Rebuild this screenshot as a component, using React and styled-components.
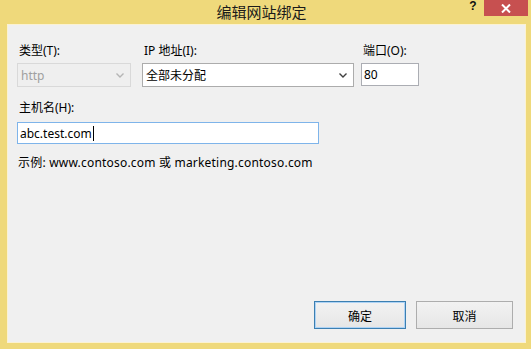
import styled, { createGlobalStyle } from 'styled-components';

const GlobalStyle = createGlobalStyle`
  html, body {
    margin: 0;
    padding: 0;
    background: #efd97b;
  }
  * {
    box-sizing: border-box;
  }
`;

const UI_FONT = `"Noto Sans", "Noto Sans CJK SC", sans-serif`;

const Window = styled.div`
  width: 531px;
  height: 349px;
  background: #efd97b;
  display: flex;
  flex-direction: column;
  font-family: ${UI_FONT};
  font-size: 12px;
  color: #000;
  overflow: hidden;
`;

const TitleBar = styled.div`
  height: 24px;
  display: grid;
  grid-template-columns: 1fr auto 1fr;
  align-items: start;
`;

const Title = styled.div`
  grid-column: 2;
  font-family: "Noto Sans CJK SC", sans-serif;
  font-size: 15px;
  line-height: 24px;
  margin-right: 8px;
  color: #1a1a1a;
`;

const Controls = styled.div`
  grid-column: 3;
  justify-self: end;
  display: flex;
  align-items: flex-start;
  margin-right: 3px;
`;

const HelpButton = styled.div`
  width: 22px;
  height: 16px;
  display: flex;
  align-items: center;
  justify-content: center;
  font-family: "Liberation Sans", sans-serif;
  font-weight: bold;
  font-size: 12px;
  color: #111;
  margin-top: -2px;
`;

const CloseButton = styled.div`
  width: 44px;
  height: 16px;
  background: #c75050;
  display: flex;
  align-items: center;
  justify-content: center;
`;

const Client = styled.div`
  flex: 1;
  margin: 0 5px 6px 7px;
  border: 1px solid #fbf2d2;
  background: #f0f0f0;
  padding: 18px 12px 13px 9px;
  display: flex;
  flex-direction: column;
`;

const FieldRow = styled.div`
  display: flex;
  align-items: flex-start;
`;

const Field = styled.div`
  display: flex;
  flex-direction: column;
  width: ${({ width }) => width}px;
  margin-right: ${({ gap = 0 }) => gap}px;
  margin-top: ${({ top = 0 }) => top}px;
`;

const Label = styled.div`
  line-height: 16px;
  height: 16px;
  padding-left: 2px;
  margin-bottom: ${({ space = 4 }) => space}px;
  white-space: nowrap;
`;

const Combo = styled.div`
  height: 24px;
  display: flex;
  align-items: center;
  justify-content: space-between;
  padding: 0 6px 0 3px;
  border: 1px solid ${({ disabled }) => (disabled ? '#d9d9d9' : '#acacac')};
  background: ${({ disabled }) => (disabled ? '#efefef' : '#fff')};
  color: ${({ disabled }) => (disabled ? '#a0a0a0' : '#000')};
`;

const TextBox = styled.div`
  height: ${({ height = 23 }) => height}px;
  display: flex;
  align-items: center;
  padding: 0 2px;
  background: #fff;
  border: 1px solid ${({ focused }) => (focused ? '#7eb4ea' : '#abadb3')};
  white-space: nowrap;
`;

const Caret = styled.span`
  display: inline-block;
  width: 1px;
  height: 15px;
  background: #000;
  margin-left: 1px;
`;

const Hint = styled.div`
  margin-top: 11px;
  line-height: 16px;
  padding-left: 1px;
  letter-spacing: 0.2px;
`;

const Footer = styled.div`
  margin-top: auto;
  display: flex;
  justify-content: flex-end;
  gap: 10px;
`;

const Button = styled.div`
  width: ${({ width }) => width}px;
  height: 28px;
  display: flex;
  align-items: center;
  justify-content: center;
  font-family: "Noto Sans CJK SC", sans-serif;
  border: 1px solid ${({ primary }) => (primary ? '#3c7fb1' : '#adadad')};
  box-shadow: ${({ primary }) => (primary ? 'inset 0 0 0 1px #aed3f5' : 'none')};
  background: linear-gradient(#f2f2f2, #e6e6e6);
`;

const Chevron = ({ color }) => (
  <svg width="8" height="5" viewBox="0 0 8 5">
    <path d="M0.5 0.5 L4 4 L7.5 0.5" fill="none" stroke={color} strokeWidth="1.4" />
  </svg>
);

const CloseIcon = () => (
  <svg width="10" height="9" viewBox="0 0 10 9">
    <path d="M1 0.5 L9 8.5 M9 0.5 L1 8.5" stroke="#fff" strokeWidth="2" />
  </svg>
);

export default function App() {
  return (
    <>
      <GlobalStyle />
      <Window>
        <TitleBar>
          <Title>编辑网站绑定</Title>
          <Controls>
            <HelpButton>?</HelpButton>
            <CloseButton>
              <CloseIcon />
            </CloseButton>
          </Controls>
        </TitleBar>
        <Client>
          <FieldRow>
            <Field width={114} gap={11}>
              <Label>类型(T):</Label>
              <Combo disabled>
                <span>http</span>
                <Chevron color="#b5b5b5" />
              </Combo>
            </Field>
            <Field width={212} gap={7}>
              <Label>IP 地址(I):</Label>
              <Combo>
                <span>全部未分配</span>
                <Chevron color="#404040" />
              </Combo>
            </Field>
            <Field width={58}>
              <Label>端口(O):</Label>
              <TextBox>80</TextBox>
            </Field>
          </FieldRow>
          <Field width={302} top={13}>
            <Label space={6}>主机名(H):</Label>
            <TextBox focused height={22}>
              abc.test.com
              <Caret />
            </TextBox>
          </Field>
          <Hint>示例: www.contoso.com 或 marketing.contoso.com</Hint>
          <Footer>
            <Button primary width={92}>确定</Button>
            <Button width={97}>取消</Button>
          </Footer>
        </Client>
      </Window>
    </>
  );
}
